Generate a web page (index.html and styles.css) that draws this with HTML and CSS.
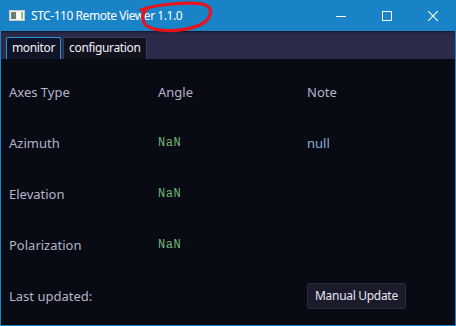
FILE: index.html
```html
<!DOCTYPE html>
<html>
<head>
<title>STC-110 Remote Viewer 1.1.0</title>
<link rel="stylesheet" href="styles.css">
</head>
<body>
<div class="window">
  <div class="titlebar">
    <svg class="app-icon" width="16" height="11" viewBox="0 0 16 11">
      <rect x="0.5" y="0.5" width="15" height="10" fill="#f2f2f2" stroke="#c8c8c8"/>
      <rect x="2" y="2" width="5" height="7" fill="#6d7f6f"/>
      <rect x="8" y="2" width="6" height="7" fill="#ffffff"/>
      <rect x="12" y="2" width="2" height="7" fill="#8bc48a"/>
    </svg>
    <span class="title">STC-110 Remote Viewer 1.1.0</span>
    <svg class="scribble" width="76" height="32" viewBox="0 0 76 32">
      <path d="M3 9 C 18 3, 50 1, 64 3 C 74 5, 75 13, 68 20 C 60 27, 42 30, 28 29.5 C 14 29, 6 25, 5 19 C 4 14, 6 10, 10 7" fill="none" stroke="#e8131c" stroke-width="3.2" stroke-linecap="round"/>
    </svg>
    <div class="controls">
      <div class="ctrl">
        <svg width="10" height="10" viewBox="0 0 10 10"><line x1="0" y1="5.5" x2="10" y2="5.5" stroke="#fff" stroke-width="1"/></svg>
      </div>
      <div class="ctrl">
        <svg width="10" height="10" viewBox="0 0 10 10"><rect x="0.5" y="0.5" width="9" height="9" fill="none" stroke="#fff" stroke-width="1"/></svg>
      </div>
      <div class="ctrl">
        <svg width="10" height="10" viewBox="0 0 10 10"><path d="M0 0 L10 10 M10 0 L0 10" stroke="#fff" stroke-width="1.1"/></svg>
      </div>
    </div>
  </div>

  <div class="tabbar">
    <div class="tab active">monitor</div>
    <div class="tab">configuration</div>
  </div>

  <div class="content">
    <div class="cell head">Axes Type</div>
    <div class="cell head">Angle</div>
    <div class="cell head">Note</div>

    <div class="cell">Azimuth</div>
    <div class="cell value">NaN</div>
    <div class="cell note">null</div>

    <div class="cell">Elevation</div>
    <div class="cell value">NaN</div>
    <div class="cell"></div>

    <div class="cell">Polarization</div>
    <div class="cell value">NaN</div>
    <div class="cell"></div>

    <div class="cell">Last updated:</div>
    <div class="cell"></div>
    <div class="cell"><button class="update">Manual Update</button></div>
  </div>
</div>
</body>
</html>
```

FILE: styles.css
```css
* {
  box-sizing: border-box;
}
body {
  margin: 0;
  background-color: #080a14;
  font-family: "Noto Sans", "Open Sans", sans-serif;
}
.window {
  width: 456px;
  height: 326px;
  border: 1px solid #1883c6;
  border-top: none;
  background-color: #080a14;
  display: flex;
  flex-direction: column;
}
.titlebar {
  position: relative;
  height: 31px;
  margin: 0 -1px;
  background-color: #1883c6;
  display: flex;
  align-items: center;
  color: #ffffff;
}
.app-icon {
  margin-left: 9px;
  margin-right: 6px;
}
.title {
  font-size: 12px;
  letter-spacing: -0.45px;
}
.scribble {
  position: absolute;
  left: 138px;
  top: 1px;
}
.controls {
  margin-left: auto;
  display: flex;
  height: 100%;
}
.ctrl {
  width: 46px;
  height: 100%;
  display: flex;
  align-items: center;
  justify-content: center;
}
.tabbar {
  height: 28px;
  background-color: #2b2a48;
  box-shadow: inset 0 2px 2px -1px #15142a;
  display: flex;
  align-items: flex-end;
  padding-left: 5px;
  gap: 2px;
}
.tab {
  height: 22px;
  padding: 0 5px;
  font-size: 12px;
  letter-spacing: -0.35px;
  line-height: 20px;
  color: #f0f0f8;
  background-color: #11121e;
  border: 1px solid #3a3a52;
  border-bottom: none;
  border-radius: 2px 2px 0 0;
}
.tab.active {
  border-color: #2a93d6;
  background-color: #101426;
}
.content {
  flex: 1;
  display: grid;
  grid-template-columns: 149px 149px 1fr;
  grid-auto-rows: 51px;
  padding: 7px 0 0 8px;
}
.cell {
  display: flex;
  align-items: center;
  font-size: 13px;
  color: #b6b4ca;
}
.cell.value {
  font-family: "Liberation Mono", "DejaVu Sans Mono", monospace;
  font-size: 12px;
  letter-spacing: 0.6px;
  color: #72b372;
}
.cell.note {
  color: #8eaad2;
}
.update {
  height: 26px;
  padding: 0 7px;
  font-family: "Noto Sans", "Open Sans", sans-serif;
  font-size: 12px;
  letter-spacing: -0.3px;
  color: #e4e6f4;
  background-color: #1b1b2b;
  border: 1px solid #2c2c3e;
  border-radius: 3px;
}
```
